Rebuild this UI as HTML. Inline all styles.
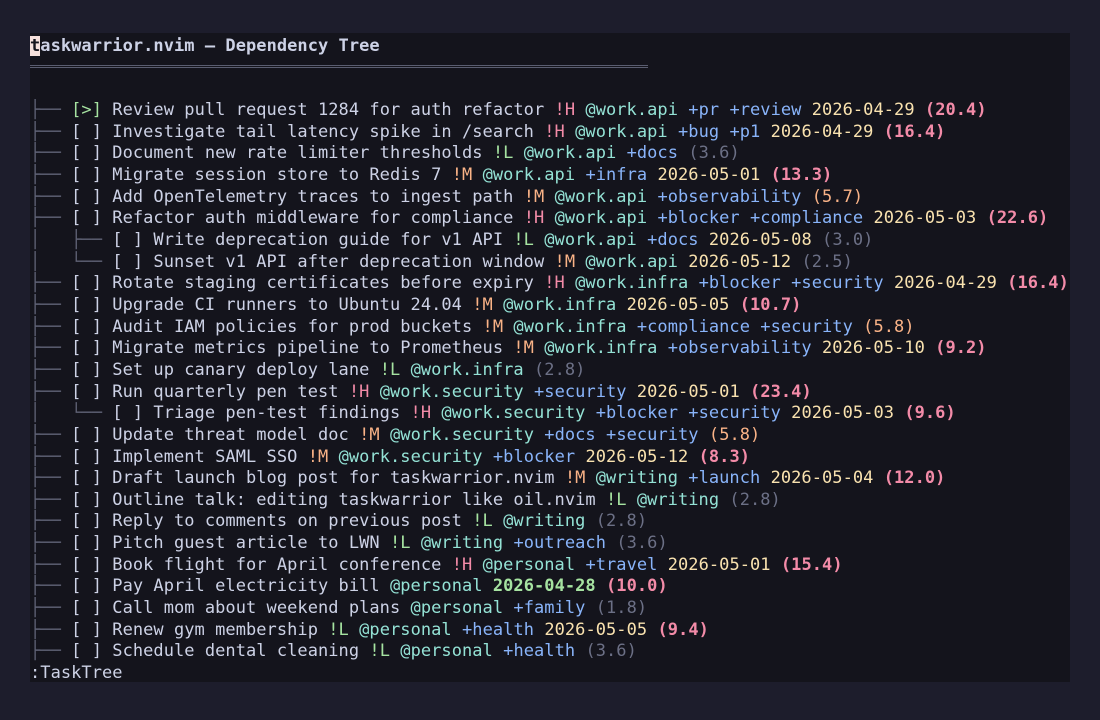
<!DOCTYPE html>
<html><head><meta charset="utf-8"><style>
html,body{margin:0;padding:0;width:1100px;height:720px;background:#1d1d2c;overflow:hidden}
#t{position:absolute;left:30px;top:33px;width:1040px;height:649px;background:#14141c}
pre{margin:0;font-family:"DejaVu Sans Mono","Liberation Mono",monospace;font-size:17px;color:#cdd2e6;white-space:pre;position:absolute;left:30px;letter-spacing:0.05px}
.g{color:#5f6275}.h{color:#f38ba8}.m{color:#fab387}.l{color:#a6e3a1}.p{color:#94e2d5}.tg{color:#89b4fa}.d{color:#f9e2af}
.u{color:#f38ba8;font-weight:bold}.o{color:#fab387}.z{color:#6c7086}.c{color:#a6e3a1}.od{color:#a6e3a1;font-weight:bold}
.cur{background:#f5e0dc;color:#14141c}
#sep{position:absolute;left:30px;top:65px;width:618px;height:3px;border-top:1px solid #5a5d70;border-bottom:1px solid #5a5d70;box-sizing:border-box}
</style></head><body>
<div id="t"></div>
<pre style="top:35px;line-height:22px;font-weight:bold"><span class="cur">t</span>askwarrior.nvim — Dependency Tree</pre>
<div id="sep"></div>
<pre style="top:100px;line-height:21.66px;left:30px"><span class="g">├── </span><span class="c">[&gt;]</span> Review pull request 1284 for auth refactor <span class="h">!H</span> <span class="p">@work.api</span> <span class="tg">+pr</span> <span class="tg">+review</span> <span class="d">2026-04-29</span> <span class="u">(20.4)</span>
<span class="g">├── </span>[ ] Investigate tail latency spike in /search <span class="h">!H</span> <span class="p">@work.api</span> <span class="tg">+bug</span> <span class="tg">+p1</span> <span class="d">2026-04-29</span> <span class="u">(16.4)</span>
<span class="g">├── </span>[ ] Document new rate limiter thresholds <span class="l">!L</span> <span class="p">@work.api</span> <span class="tg">+docs</span> <span class="z">(3.6)</span>
<span class="g">├── </span>[ ] Migrate session store to Redis 7 <span class="m">!M</span> <span class="p">@work.api</span> <span class="tg">+infra</span> <span class="d">2026-05-01</span> <span class="u">(13.3)</span>
<span class="g">├── </span>[ ] Add OpenTelemetry traces to ingest path <span class="m">!M</span> <span class="p">@work.api</span> <span class="tg">+observability</span> <span class="o">(5.7)</span>
<span class="g">├── </span>[ ] Refactor auth middleware for compliance <span class="h">!H</span> <span class="p">@work.api</span> <span class="tg">+blocker</span> <span class="tg">+compliance</span> <span class="d">2026-05-03</span> <span class="u">(22.6)</span>
<span class="g">│   ├── </span>[ ] Write deprecation guide for v1 API <span class="l">!L</span> <span class="p">@work.api</span> <span class="tg">+docs</span> <span class="d">2026-05-08</span> <span class="z">(3.0)</span>
<span class="g">│   └── </span>[ ] Sunset v1 API after deprecation window <span class="m">!M</span> <span class="p">@work.api</span> <span class="d">2026-05-12</span> <span class="z">(2.5)</span>
<span class="g">├── </span>[ ] Rotate staging certificates before expiry <span class="h">!H</span> <span class="p">@work.infra</span> <span class="tg">+blocker</span> <span class="tg">+security</span> <span class="d">2026-04-29</span> <span class="u">(16.4)</span>
<span class="g">├── </span>[ ] Upgrade CI runners to Ubuntu 24.04 <span class="m">!M</span> <span class="p">@work.infra</span> <span class="d">2026-05-05</span> <span class="u">(10.7)</span>
<span class="g">├── </span>[ ] Audit IAM policies for prod buckets <span class="m">!M</span> <span class="p">@work.infra</span> <span class="tg">+compliance</span> <span class="tg">+security</span> <span class="o">(5.8)</span>
<span class="g">├── </span>[ ] Migrate metrics pipeline to Prometheus <span class="m">!M</span> <span class="p">@work.infra</span> <span class="tg">+observability</span> <span class="d">2026-05-10</span> <span class="u">(9.2)</span>
<span class="g">├── </span>[ ] Set up canary deploy lane <span class="l">!L</span> <span class="p">@work.infra</span> <span class="z">(2.8)</span>
<span class="g">├── </span>[ ] Run quarterly pen test <span class="h">!H</span> <span class="p">@work.security</span> <span class="tg">+security</span> <span class="d">2026-05-01</span> <span class="u">(23.4)</span>
<span class="g">│   └── </span>[ ] Triage pen-test findings <span class="h">!H</span> <span class="p">@work.security</span> <span class="tg">+blocker</span> <span class="tg">+security</span> <span class="d">2026-05-03</span> <span class="u">(9.6)</span>
<span class="g">├── </span>[ ] Update threat model doc <span class="m">!M</span> <span class="p">@work.security</span> <span class="tg">+docs</span> <span class="tg">+security</span> <span class="o">(5.8)</span>
<span class="g">├── </span>[ ] Implement SAML SSO <span class="m">!M</span> <span class="p">@work.security</span> <span class="tg">+blocker</span> <span class="d">2026-05-12</span> <span class="u">(8.3)</span>
<span class="g">├── </span>[ ] Draft launch blog post for taskwarrior.nvim <span class="m">!M</span> <span class="p">@writing</span> <span class="tg">+launch</span> <span class="d">2026-05-04</span> <span class="u">(12.0)</span>
<span class="g">├── </span>[ ] Outline talk: editing taskwarrior like oil.nvim <span class="l">!L</span> <span class="p">@writing</span> <span class="z">(2.8)</span>
<span class="g">├── </span>[ ] Reply to comments on previous post <span class="l">!L</span> <span class="p">@writing</span> <span class="z">(2.8)</span>
<span class="g">├── </span>[ ] Pitch guest article to LWN <span class="l">!L</span> <span class="p">@writing</span> <span class="tg">+outreach</span> <span class="z">(3.6)</span>
<span class="g">├── </span>[ ] Book flight for April conference <span class="h">!H</span> <span class="p">@personal</span> <span class="tg">+travel</span> <span class="d">2026-05-01</span> <span class="u">(15.4)</span>
<span class="g">├── </span>[ ] Pay April electricity bill <span class="p">@personal</span> <span class="od">2026-04-28</span> <span class="u">(10.0)</span>
<span class="g">├── </span>[ ] Call mom about weekend plans <span class="p">@personal</span> <span class="tg">+family</span> <span class="z">(1.8)</span>
<span class="g">├── </span>[ ] Renew gym membership <span class="l">!L</span> <span class="p">@personal</span> <span class="tg">+health</span> <span class="d">2026-05-05</span> <span class="u">(9.4)</span>
<span class="g">├── </span>[ ] Schedule dental cleaning <span class="l">!L</span> <span class="p">@personal</span> <span class="tg">+health</span> <span class="z">(3.6)</span></pre>
<pre style="top:662px;line-height:22px">:TaskTree</pre>
</body></html>
